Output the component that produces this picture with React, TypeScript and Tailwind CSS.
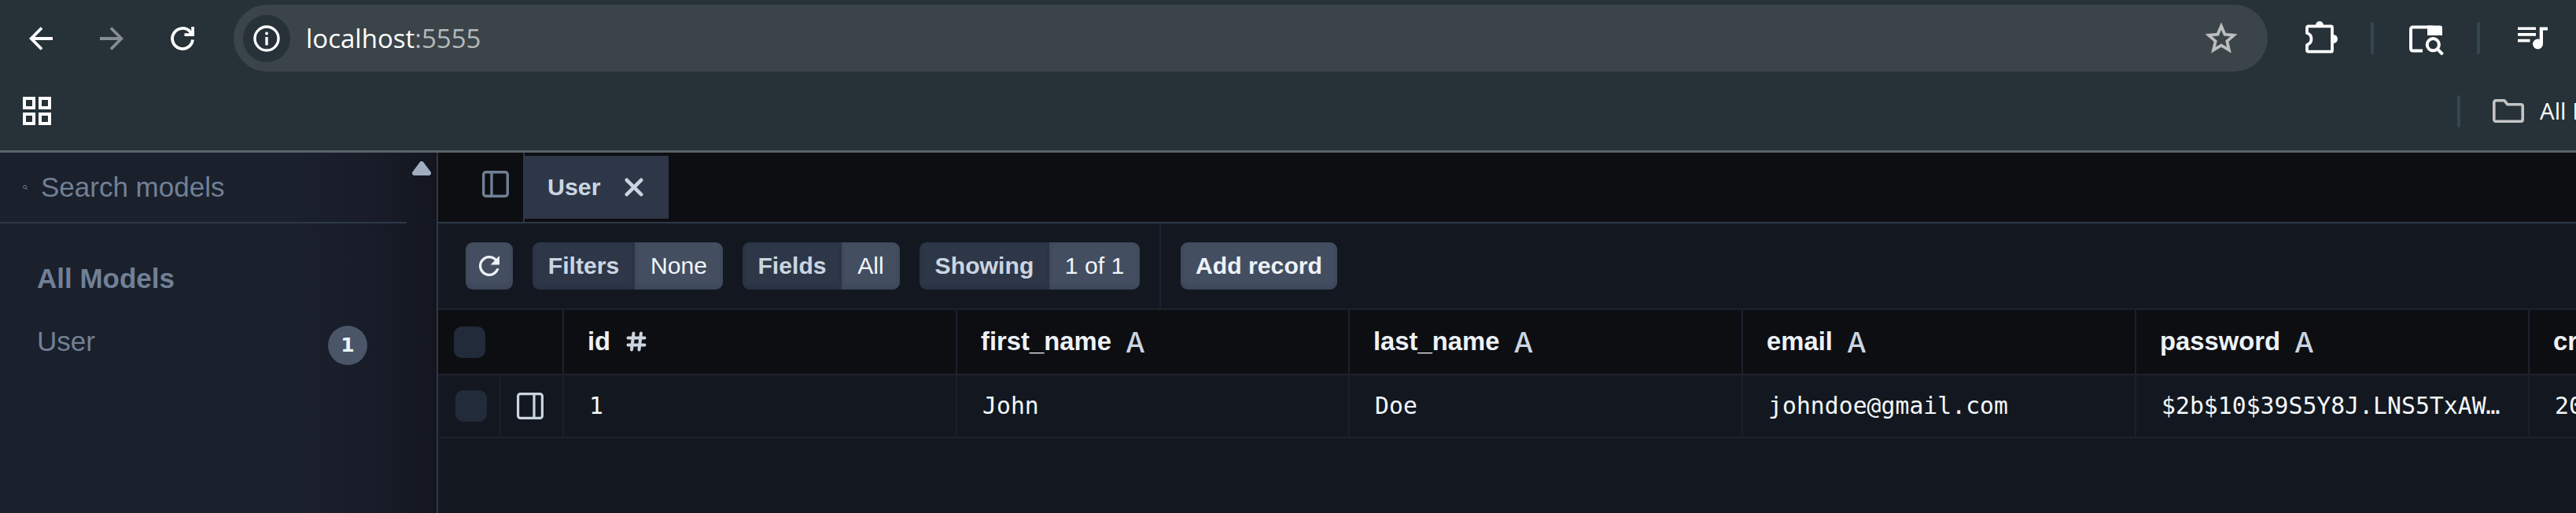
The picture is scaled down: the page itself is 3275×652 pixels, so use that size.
import React from "react";

const arial = "font-['Liberation_Sans',Arial,sans-serif]";
const segoe = "font-['Open_Sans','Noto_Sans',sans-serif]";

function Toolbar() {
  return (
    <div className="flex h-[97px] shrink-0 items-center">
      <svg className="ml-[37px] h-[30px] w-[30px] shrink-0" viewBox="0 0 30 30" fill="none" stroke="#fff" strokeWidth="3.8">
        <path d="M30 15H3M16 1.5 2.7 15 16 28.5" />
      </svg>
      <svg className="ml-[60px] h-[30px] w-[30px] shrink-0" viewBox="0 0 30 30" fill="none" stroke="#868d90" strokeWidth="3.8">
        <path d="M0 15h27M14 1.5 27.3 15 14 28.5" />
      </svg>
      <svg className="ml-[60px] h-[30px] w-[30px] shrink-0" viewBox="0 0 30 30" fill="none" stroke="#fff" strokeWidth="3.8">
        <path d="M28 16.5A13 13 0 1 1 24.5 6L28 10" />
        <path d="M28.1 0v10.1H17.5" />
      </svg>
      <div className="ml-[50px] flex h-[85px] w-[2586px] shrink-0 items-center rounded-full bg-[#3a4449]">
        <div className="ml-[12px] flex h-[60px] w-[60px] items-center justify-center rounded-full bg-[#263238]">
          <svg className="h-[34px] w-[34px]" viewBox="0 0 34 34" fill="none">
            <circle cx="17" cy="17" r="15" stroke="#fff" strokeWidth="3.4" />
            <path d="M17 15v10.5" stroke="#fff" strokeWidth="3.4" />
            <circle cx="17" cy="10.6" r="2" fill="#fff" />
          </svg>
        </div>
        <div className={`ml-[20px] whitespace-pre text-[33px] leading-[48px] text-white ${segoe}`}>
          localhost<span className="text-[#b5b9bb]">:5555</span>
        </div>
        <svg className="mr-[39px] mb-[2px] ml-auto h-[40px] w-[40px]" viewBox="0 0 24 24" fill="#bfbfbf" stroke="#bfbfbf" strokeWidth="0.3">
          <path d="m22 9.24-7.19-.62L12 2 9.19 8.63 2 9.24l5.46 4.73L5.82 21 12 17.27 18.18 21l-1.63-7.03zM12 15.4l-3.76 2.27 1-4.28-3.32-2.88 4.38-.38L12 6.1l1.71 4.04 4.38.38-3.32 2.88 1 4.28z" transform="translate(-2.4 -1.8) scale(1.2)" />
        </svg>
      </div>
      <svg className="ml-[47px] h-[44px] w-[44px] shrink-0" viewBox="0 0 44 44">
        <path d="M4.500 6.300h29a1.500 1.500 0 0 1 1.500 1.500v29.400a1.500 1.500 0 0 1-1.500 1.500h-29a1.500 1.500 0 0 1-1.500-1.500V30q5.500-1.800 5.500-7.500T3 15V7.800a1.500 1.500 0 0 1 1.500-1.500z" fill="none" stroke="#fff" strokeWidth="3.8" strokeLinejoin="round" />
        <path d="M14 5a5 5 0 0 1 10 0zM36.500 17a5.300 5.300 0 0 1 0 11z" fill="#fff" />
      </svg>
      <div className="ml-[40px] h-[41px] w-[4px] shrink-0 rounded-full bg-[#344750]" />
      <svg className="ml-[45px] h-[44px] w-[44px] shrink-0" viewBox="0 0 44 44" fill="none" stroke="#fff">
        <path d="M17 37.500H4.500a2.500 2.500 0 0 1-2.500-2.500V10a2.500 2.500 0 0 1 2.500-2.500H30" strokeWidth="4" />
        <path d="M23 5.500h16q3 0 3 3V18H23z" fill="#fff" stroke="none" />
        <circle cx="30.300" cy="29.700" r="7.600" strokeWidth="4" />
        <path d="m35.500 35 7 7.200" strokeWidth="4" />
      </svg>
      <div className="ml-[42px] h-[41px] w-[4px] shrink-0 rounded-full bg-[#344750]" />
      <svg className="ml-[48px] h-[30px] w-[38px] shrink-0" viewBox="0 0 38 30" fill="#fff">
        <path d="M0 .5h23v3.500H0zM0 8h23v3.700H0zM0 15.700h15.500v3.800H0z" />
        <circle cx="25.500" cy="22" r="6.500" />
        <path d="M27.700.5H38v4h-6V22h-4.300z" />
      </svg>
    </div>
  );
}

function Bookmarks() {
  return (
    <div className="h-[97px] shrink-0 border-b-[3px] border-[#5a6468]">
      <div className="flex h-[88px] items-center">
        <div className="ml-[29px] grid grid-cols-2 gap-[4px]">
          {[0, 1, 2, 3].map((i) => (
            <div key={i} className="h-[16px] w-[16px] border-4 border-white" />
          ))}
        </div>
        <div className="ml-auto h-[41px] w-[4px] shrink-0 rounded-full bg-[#344750]" />
        <svg className="ml-[41px] h-[30px] w-[40px] shrink-0" viewBox="0 0 40 30" fill="none" stroke="#c4c4c4" strokeWidth="3.6" strokeLinejoin="round">
          <path d="M4 1.800h11l4 5h17a2.200 2.200 0 0 1 2.200 2.200v17a2.200 2.200 0 0 1-2.200 2.200H4A2.200 2.200 0 0 1 1.800 26V4A2.200 2.200 0 0 1 4 1.800z" />
        </svg>
        <div className={`ml-[20px] w-[46px] overflow-hidden text-[29.500px] leading-[40px] whitespace-nowrap text-white ${segoe}`}>
          All Bookmarks
        </div>
      </div>
    </div>
  );
}

function Sidebar() {
  return (
    <aside className={`flex w-[557px] shrink-0 border-r-2 border-[#2d3748] bg-[linear-gradient(to_right,#1a202c_0px,#1a202c_380px,#181c28_480px,#13161f_555px)] text-[35px] text-[#718096] ${arial}`}>
      <div className="w-[517px]">
        <div className="flex h-[90px] items-center border-b-2 border-[#2d3748] pl-[29px]">
          <svg className="h-[6px] w-[6px]" viewBox="0 0 6 6" fill="none" stroke="#718096">
            <circle cx="2.600" cy="2.600" r="2" />
            <path d="m4 4 2 2" />
          </svg>
          <span className="ml-[17px] leading-[40px]">Search models</span>
        </div>
        <div className="mt-[50px] pl-[47px] leading-[40px] font-bold">All Models</div>
        <div className="mt-[40px] flex h-[50px] items-center pr-[50px] pl-[47px]">
          <span className="pb-[10px] leading-[40px]">User</span>
          <span className="ml-auto flex h-[50px] w-[50px] items-center justify-center rounded-full bg-[#4a5568] font-['DejaVu_Sans',sans-serif] text-[25px] font-bold text-[#edf2f7]">1</span>
        </div>
      </div>
      <svg className="mt-[11px] ml-[7px] h-[18px] w-[24px]" viewBox="0 0 24 18" fill="#a0aec0" stroke="#a0aec0" strokeWidth="6" strokeLinejoin="round">
        <path d="M12 3 21 15H3z" />
      </svg>
    </aside>
  );
}

const shade = "shadow-[inset_0_-3px_6px_rgba(20,24,34,0.18)]";

function Pill({ label, value, className, left, right }: { label: string; value: string; className: string; left: string; right: string }) {
  return (
    <div className={`flex h-[60px] shrink-0 overflow-hidden rounded-[9px] ${className}`}>
      <div className={`flex items-center justify-center bg-[#2d3748] font-bold text-[#cbd5e0] ${shade} ${left}`}>{label}</div>
      <div className={`flex items-center justify-center bg-[#434e61] text-[#f1f5f9] ${shade} ${right}`}>{value}</div>
    </div>
  );
}

function Tabs() {
  return (
    <div className="flex h-[90px] border-b-2 border-[#2d3748] bg-[#0d0e12]">
      <div className="flex w-[110px] justify-start border-r-2 border-[#2d3748] pt-[23px] pl-[56px]">
        <svg className="h-[34px] w-[34px]" viewBox="0 0 34 34" fill="none" stroke="#718096" strokeWidth="3.4">
          <rect x="1.700" y="1.700" width="30.600" height="30.600" rx="3" />
          <path d="M12 1.500v31" />
        </svg>
      </div>
      <div className="mt-[4px] flex h-[80px] w-[183px] items-center bg-[#2d3748] pl-[29px] text-[30.4px] font-bold text-[#cbd5e0]">
        User
        <svg className="ml-[30px] h-[24px] w-[24px]" viewBox="0 0 24 24" fill="none" stroke="#cbd5e0" strokeWidth="4.6" strokeLinecap="round">
          <path d="m2.800 2.800 18.400 18.400M21.200 2.800 2.800 21.200" />
        </svg>
      </div>
    </div>
  );
}

function Actions() {
  return (
    <div className="flex h-[110px] items-center border-b-2 border-[#1c212d] pl-[35px] text-[30.2px] whitespace-nowrap">
      <div className={`flex h-[60px] w-[60px] shrink-0 items-center justify-center rounded-[9px] bg-[#434e61] ${shade}`}>
        <svg className="h-[26px] w-[26px]" viewBox="0 0 16 16" fill="#edf2f7">
          <path d="M13.650 2.350A8 8 0 1 0 15.730 10h-2.080A6 6 0 1 1 8 2c1.660 0 3.140.690 4.220 1.780L9 7h7V0z" />
        </svg>
      </div>
      <Pill className="ml-[25px]" label="Filters" value="None" left="w-[130px]" right="w-[112px]" />
      <Pill className="ml-[25px]" label="Fields" value="All" left="w-[126px]" right="w-[74px]" />
      <Pill className="ml-[25px]" label="Showing" value="1 of 1" left="w-[165px]" right="w-[115px]" />
      <div className="ml-[25px] h-full w-[2px] bg-[#1c212d]" />
      <div className={`ml-[25px] flex h-[60px] w-[199px] shrink-0 items-center justify-center rounded-[9px] bg-[#434e61] font-bold text-[#edf2f7] ${shade}`}>
        Add record
      </div>
    </div>
  );
}

const columns = [
  { name: "id", value: "1", type: "#", width: "w-[500px]" },
  { name: "first_name", value: "John", type: "A", width: "w-[499px]" },
  { name: "last_name", value: "Doe", type: "A", width: "w-[500px]" },
  { name: "email", value: "johndoe@gmail.com", type: "A", width: "w-[500px]" },
  { name: "password", value: "$2b$10$39S5Y8J.LNS5TxAW…", type: "A", width: "w-[500px]" },
  { name: "created_at", value: "2024-01-01", type: "#", width: "w-[500px]" },
];

function TypeIcon({ type }: { type: string }) {
  if (type === "#") {
    return (
      <svg className="ml-[20px] h-[26px] w-[26px]" viewBox="0 0 26 26" fill="none" stroke="#cbd5e0" strokeWidth="4" strokeLinecap="round">
        <path d="M2.500 8.500h21M2.500 17.500h21M9.500 2.500l-2.500 21M19 2.500l-2.500 21" />
      </svg>
    );
  }
  return <span className="ml-[18px] pt-[2px] text-[35px] leading-[40px] font-medium text-[#cbd5e0] font-['Inter',sans-serif]">A</span>;
}

function Table() {
  return (
    <div>
      <div className="flex h-[83px] border-b-2 border-[#1c212d] bg-[#0d0e12]">
        <div className="flex w-[160px] shrink-0 items-center border-r-2 border-[#1c212d] pl-[20px]">
          <div className="h-[40px] w-[40px] rounded-[10px] bg-[#222b39]" />
        </div>
        {columns.map((c) => (
          <div key={c.name} className={`flex shrink-0 items-center border-r-2 border-[#1c212d] pb-[2px] pl-[30px] text-[32.8px] leading-[40px] font-bold text-[#edf2f7] ${c.width}`}>
            {c.name}
            <TypeIcon type={c.type} />
          </div>
        ))}
      </div>
      <div className="flex h-[80px] border-b-2 border-[#1c212d]">
        <div className="flex w-[80px] shrink-0 items-center border-r-2 border-[#1a1f2a] pl-[22px]">
          <div className="h-[40px] w-[40px] rounded-[10px] bg-[#222b39]" />
        </div>
        <div className="flex w-[80px] shrink-0 items-center border-r-2 border-[#1a1f2a] pl-[20px]">
          <svg className="h-[34px] w-[34px]" viewBox="0 0 34 34" fill="none" stroke="#cbd5e0" strokeWidth="3.2">
            <rect x="1.600" y="1.600" width="30.800" height="30.800" rx="3" />
            <path d="M22 1.600v30.800" />
          </svg>
        </div>
        {columns.map((c) => (
          <div key={c.name} className={`flex shrink-0 items-center border-r-2 border-[#1a1f2a] pl-[32px] text-[29.800px] leading-[40px] whitespace-nowrap text-[#f4f7fa] font-['DejaVu_Sans_Mono',monospace] ${c.width}`}>
            {c.value}
          </div>
        ))}
      </div>
    </div>
  );
}

export default function App() {
  return (
    <div className="flex h-[652px] w-[3275px] flex-col overflow-hidden bg-[#263238]">
      <Toolbar />
      <Bookmarks />
      <div className="flex min-h-0 flex-1">
        <Sidebar />
        <main className={`min-w-0 flex-1 overflow-hidden bg-[#131820] ${arial}`}>
          <Tabs />
          <Actions />
          <Table />
        </main>
      </div>
    </div>
  );
}
